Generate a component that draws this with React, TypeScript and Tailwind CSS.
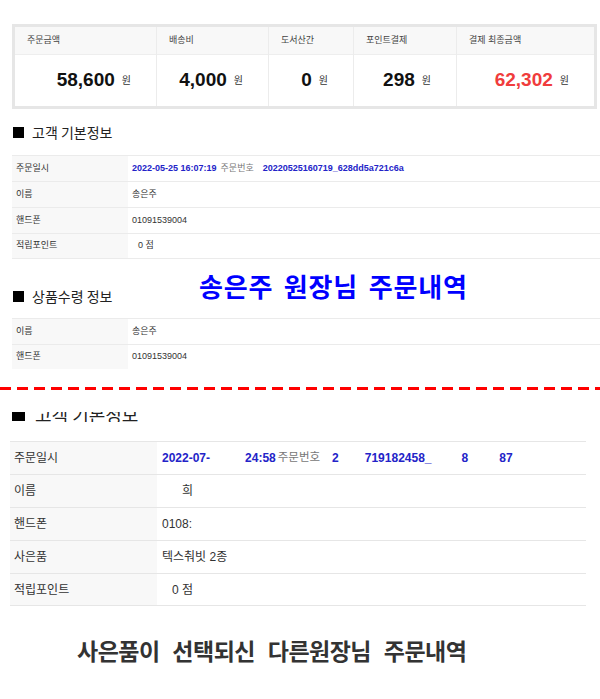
import React from "react";

const sans = "font-['Liberation_Sans','Noto_Sans_CJK_KR',sans-serif]";
const kr = "font-['Noto_Sans_CJK_KR',sans-serif]";

const summary = [
  { label: "주문금액", value: "58,600" },
  { label: "배송비", value: "4,000" },
  { label: "도서산간", value: "0" },
  { label: "포인트결제", value: "298" },
  { label: "결제 최종금액", value: "62,302", red: true },
];

const Heading = ({ title }: { title: string }) => (
  <div className="flex items-center h-[20px] pl-[13px]">
    <div className="w-[11px] h-[11px] bg-black" />
    <span className={`ml-[8px] text-[14px] text-[#222] ${kr}`}>{title}</span>
  </div>
);

const SmallRow = ({ label, children, last }: { label: string; children?: React.ReactNode; last?: boolean }) => (
  <div className={`flex h-[26px] border-t border-[#ebebeb] ${last ? "border-b" : ""}`}>
    <div className="w-[116px] bg-[#f8f8f8] pl-[4px] flex items-center text-[9px] text-[#333]">{label}</div>
    <div className="flex-1 pl-[4px] flex items-center text-[9px] text-[#333]">{children}</div>
  </div>
);

const BigRow = ({ label, children, last }: { label: string; children?: React.ReactNode; last?: boolean }) => (
  <div className={`flex h-[33px] border-t border-[#e6e6e6] ${last ? "border-b" : ""}`}>
    <div className="w-[147px] bg-[#f8f8f8] pl-[4px] flex items-center text-[12px] text-[#333]">{label}</div>
    <div className="flex-1 pl-[5px] flex items-center text-[12px] text-[#333]">{children}</div>
  </div>
);

export default function App() {
  return (
    <div className={`w-[600px] h-[699px] bg-white overflow-hidden ${sans}`}>
      {/* summary box */}
      <div className="pt-[24px] pl-[12px]">
        <div className="w-[585px] h-[85px] border-[3px] border-[#e6e6e6] grid grid-cols-[142px_112px_85px_103px_1fr] divide-x divide-[#ececec]">
          {summary.map((s) => (
            <div key={s.label} className="flex flex-col">
              <div className="h-[28px] bg-[#f8f8f8] border-b border-[#eeeeee] pl-[12px] flex items-center text-[9px] text-[#444]">
                {s.label}
              </div>
              <div className="flex-1 flex items-center justify-end pr-[25px]">
                <span className={`text-[19px] font-bold ${s.red ? "text-[#f03c3c]" : "text-[#111]"}`}>{s.value}</span>
                <span className="ml-[7px] text-[10px] text-[#333]">원</span>
              </div>
            </div>
          ))}
        </div>
      </div>

      {/* 고객 기본정보 */}
      <div className="mt-[13px]">
        <Heading title="고객 기본정보" />
      </div>
      <div className="mt-[13px] ml-[12px]">
        <SmallRow label="주문일시">
          <span className="font-bold text-[#2323c8]">2022-05-25 16:07:19</span>
          <span className="ml-[4px] text-[#777]">주문번호</span>
          <span className="ml-[9px] font-bold text-[#2323c8]">20220525160719_628dd5a721c6a</span>
        </SmallRow>
        <SmallRow label="이름">송은주</SmallRow>
        <SmallRow label="핸드폰">01091539004</SmallRow>
        <SmallRow label="적립포인트" last>
          <span className="ml-[6px]">0 점</span>
        </SmallRow>
      </div>

      {/* 상품수령 정보 */}
      <div className="mt-[27px] relative">
        <Heading title="상품수령 정보" />
        <div className={`absolute left-[199px] top-[-20px] text-[26px] font-bold text-[#0000ff] tracking-[0.8px] [word-spacing:4px] ${kr}`}>
          송은주 원장님 주문내역
        </div>
      </div>
      <div className="mt-[12px] ml-[12px]">
        <SmallRow label="이름">송은주</SmallRow>
        <div className="flex h-[25px] border-t border-[#ebebeb]">
          <div className="w-[116px] bg-[#f8f8f8] pl-[4px] flex items-center text-[9px] text-[#333]">핸드폰</div>
          <div className="flex-1 pl-[4px] flex items-center text-[9px] text-[#333]">01091539004</div>
        </div>
      </div>

      {/* divider */}
      <div className="mt-[18px] h-[3px] bg-[repeating-linear-gradient(90deg,#ff0000_0_11px,transparent_11px_17px)]" />

      {/* second screenshot, heading cropped at the top as in the capture */}
      <div className="mt-[22px] h-[10px] overflow-hidden">
        <div className="mt-[-9px] flex items-center h-[22px] pl-[12px]">
          <div className="w-[13px] h-[14px] bg-black" />
          <span className={`ml-[10px] text-[18px] text-[#222] ${kr}`}>고객 기본정보</span>
        </div>
      </div>
      <div className="mt-[19px] ml-[10px] w-[576px]">
        <BigRow label="주문일시">
          <span className="font-bold text-[#2323c8]">2022-07-</span>
          <span className="ml-[35px] font-bold text-[#2323c8]">24:58</span>
          <span className="ml-[2px] text-[11.5px] text-[#777]">주문번호</span>
          <span className="ml-[12px] font-bold text-[#2323c8]">2</span>
          <span className="ml-[26px] font-bold text-[#2323c8]">719182458_</span>
          <span className="ml-[30px] font-bold text-[#2323c8]">8</span>
          <span className="ml-[31px] font-bold text-[#2323c8]">87</span>
        </BigRow>
        <BigRow label="이름">
          <span className="ml-[20px]">희</span>
        </BigRow>
        <BigRow label="핸드폰">0108:</BigRow>
        <BigRow label="사은품">텍스춰빗 2종</BigRow>
        <BigRow label="적립포인트" last>
          <span className="ml-[10px]">0 점</span>
        </BigRow>
      </div>

      <div className={`mt-[28px] pl-[77px] text-[23px] leading-[32px] font-bold text-[#333] tracking-[-0.5px] [word-spacing:8px] ${kr}`}>
        사은품이 선택되신 다른원장님 주문내역
      </div>
    </div>
  );
}
